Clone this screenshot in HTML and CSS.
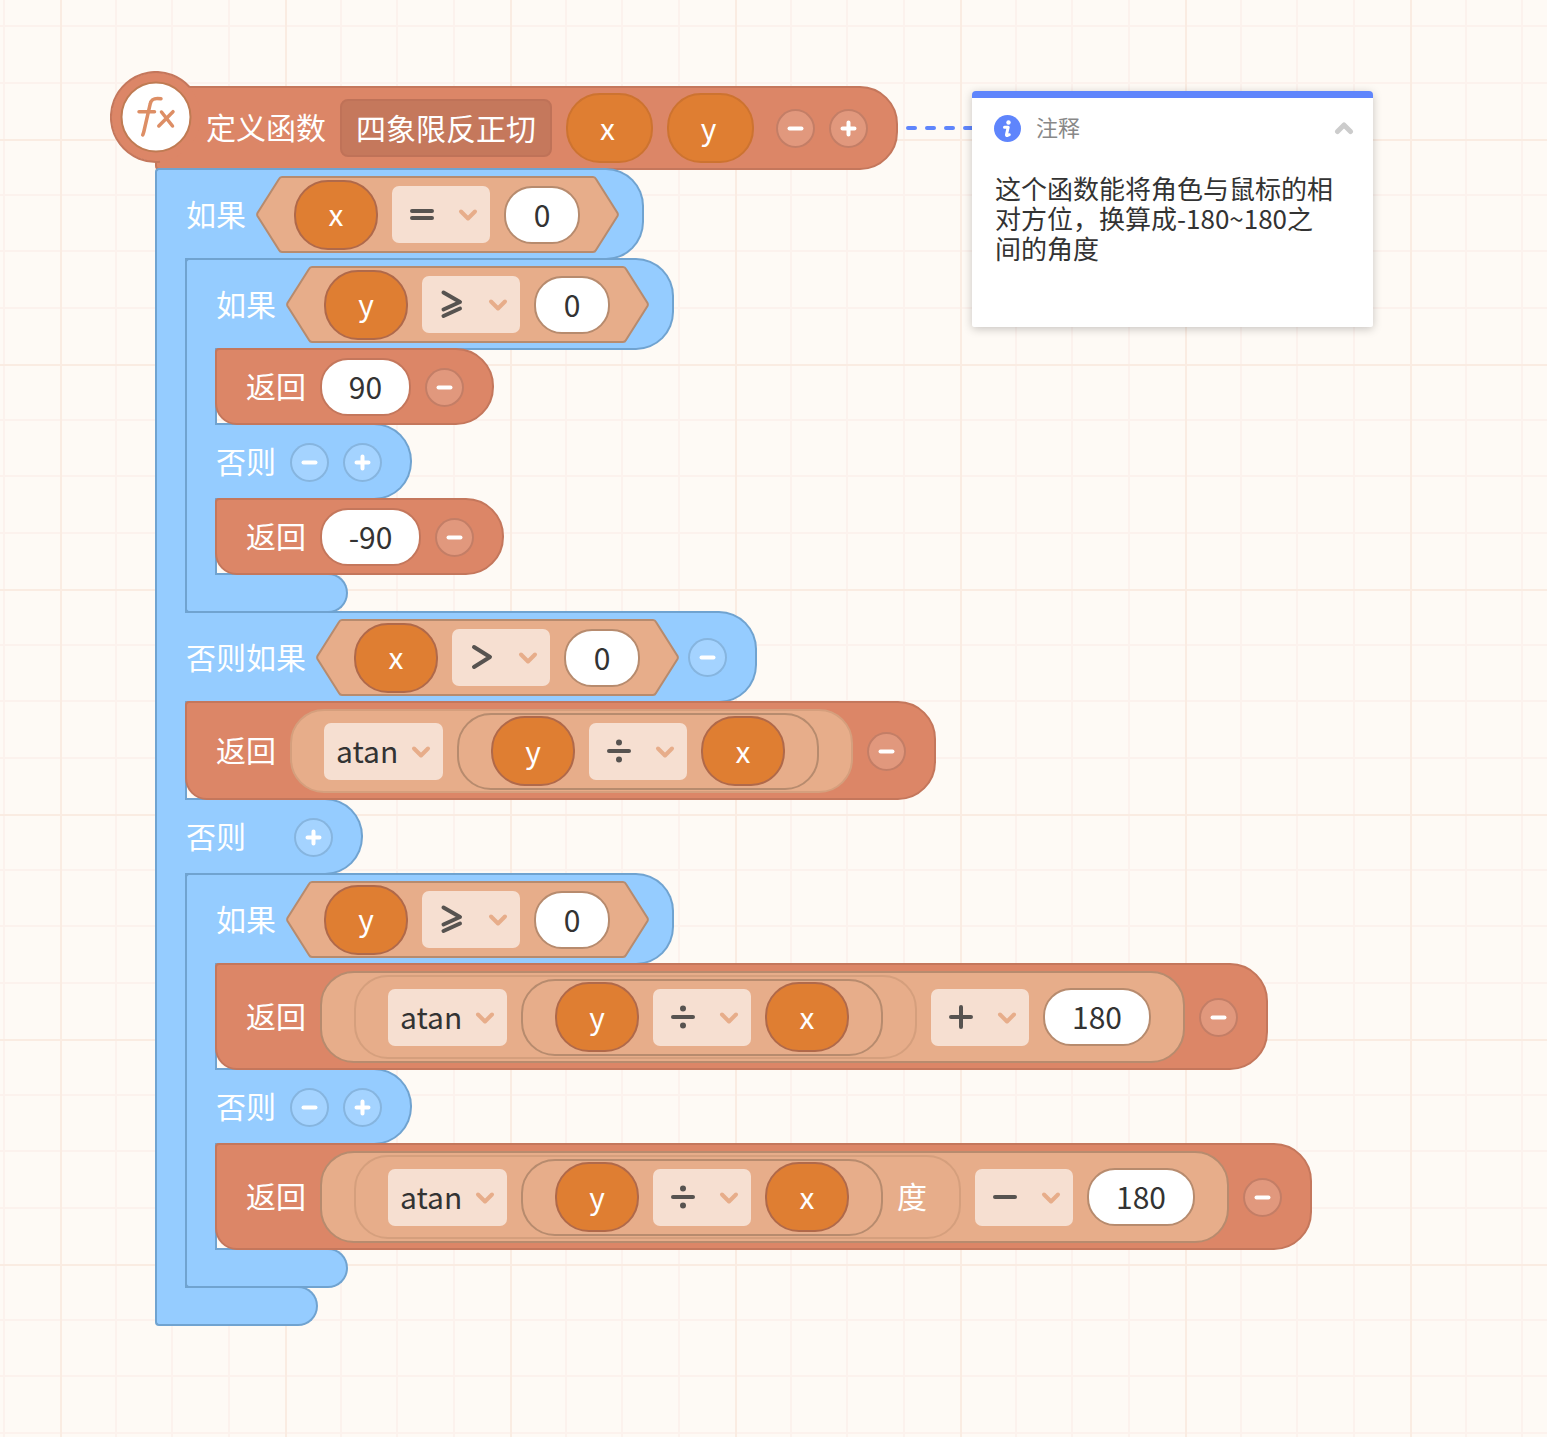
FILE: index.html
```
<!DOCTYPE html>
<html lang="zh-CN">
<head>
    <meta charset="UTF-8">
    <meta name="viewport" content="width=device-width, initial-scale=1.0">
    <title>四象限反正切</title>
    <link rel="stylesheet" href="styles.css">
</head>
<body>
    <!-- Shared icons -->
    <svg class="sprite" aria-hidden="true">
        <symbol id="minus" viewBox="0 0 39 39"><path d="M13.500 19.500h12" /></symbol>
        <symbol id="plus" viewBox="0 0 39 39"><path d="M13.500 19.500h12M19.500 13.500v12" /></symbol>
        <symbol id="chevron" viewBox="0 0 20 14"><path d="M3 3.500l7 7 7-7" /></symbol>
        <symbol id="op-eq" viewBox="0 0 30 30"><path d="M5 12h20M5 19h20" /></symbol>
        <symbol id="op-gt" viewBox="0 0 30 30"><path d="M7 5l16 10L7 25" /></symbol>
        <symbol id="op-ge" viewBox="0 0 30 30"><path d="M6.500 3.500L23 13 6.500 20.500M6.500 27L23 19.500" /></symbol>
        <symbol id="op-div" viewBox="0 0 30 30"><path d="M5 15h20" /><path class="dot" d="M15 6.500v.01M15 23.500v.01" /></symbol>
        <symbol id="op-add" viewBox="0 0 30 30"><path d="M5 15h20M15 5v20" /></symbol>
        <symbol id="op-sub" viewBox="0 0 30 30"><path d="M5 15h20" /></symbol>
        <symbol id="cap-left" viewBox="0 0 26 77">
            <path class="cap-fill" d="M26 1Q24 1 23 3L1.500 37Q.8 38.500 1.500 40L23 74Q24 76 26 76z" />
            <path class="cap-line" d="M26 1Q24 1 23 3L1.500 37Q.8 38.500 1.500 40L23 74Q24 76 26 76" />
        </symbol>
    </svg>

    <main class="canvas">
        <div class="script">
            <!-- Function definition -->
            <div class="def">
                <svg class="badge" viewBox="0 0 92 92" aria-hidden="true">
                    <circle class="badge-ring" cx="46" cy="46" r="44.500" />
                    <path class="badge-edge" d="M79.500 16A45 45 0 1 0 50 90.800" />
                    <circle class="badge-disc" cx="46" cy="46" r="34.500" />
                    <path class="badge-fx" d="M51 27.800C44 26.600 41.200 28 40.200 33L34 60Q33.400 62.500 32.700 64M29 40.700H44.500M51.500 41L62.500 55M63 40.700L48.800 55" />
                </svg>
                <label class="text" for="fnName">定义函数</label>
                <input class="fn-name" id="fnName" type="text" value="四象限反正切">
                <span class="var param">x</span>
                <span class="var param">y</span>
                <button class="round first" type="button" aria-label="减少参数"><svg><use href="#minus" /></svg></button>
                <button class="round" type="button" aria-label="增加参数"><svg><use href="#plus" /></svg></button>
            </div>

            <div class="c-block">
                <div class="spine"></div>
                <div class="stack">
                    <div class="row">
                        <span class="text">如果</span>
                        <div class="hex">
                            <svg class="cap"><use href="#cap-left" /></svg>
                            <div class="hex-body">
                                <span class="var">x</span>
                                <span class="drop op"><select aria-label="比较"><option>=</option></select><svg class="sign"><use href="#op-eq" /></svg><svg class="arrow"><use href="#chevron" /></svg></span>
                                <input class="num" type="text" value="0" aria-label="数值">
                            </div>
                            <svg class="cap flip"><use href="#cap-left" /></svg>
                        </div>
                    </div>

                    <div class="body">
                        <div class="c-block">
                            <div class="spine"></div>
                            <div class="stack">
                                <div class="row">
                                    <span class="text">如果</span>
                                    <div class="hex">
                                        <svg class="cap"><use href="#cap-left" /></svg>
                                        <div class="hex-body">
                                            <span class="var">y</span>
                                            <span class="drop op"><select aria-label="比较"><option>⩾</option></select><svg class="sign"><use href="#op-ge" /></svg><svg class="arrow"><use href="#chevron" /></svg></span>
                                            <input class="num" type="text" value="0" aria-label="数值">
                                        </div>
                                        <svg class="cap flip"><use href="#cap-left" /></svg>
                                    </div>
                                </div>
                                <div class="body">
                                    <div class="return">
                                        <span class="text">返回</span>
                                        <input class="num two" type="text" value="90" aria-label="返回值">
                                        <button class="round" type="button" aria-label="删除返回值"><svg><use href="#minus" /></svg></button>
                                    </div>
                                </div>
                                <div class="row">
                                    <span class="text">否则</span>
                                    <button class="round" type="button" aria-label="减少分支"><svg><use href="#minus" /></svg></button>
                                    <button class="round" type="button" aria-label="增加分支"><svg><use href="#plus" /></svg></button>
                                </div>
                                <div class="body">
                                    <div class="return">
                                        <span class="text">返回</span>
                                        <input class="num signed" type="text" value="-90" aria-label="返回值">
                                        <button class="round" type="button" aria-label="删除返回值"><svg><use href="#minus" /></svg></button>
                                    </div>
                                </div>
                                <div class="tail"></div>
                            </div>
                        </div>
                    </div>

                    <div class="row">
                        <span class="text">否则如果</span>
                        <div class="hex">
                            <svg class="cap"><use href="#cap-left" /></svg>
                            <div class="hex-body">
                                <span class="var">x</span>
                                <span class="drop op"><select aria-label="比较"><option>&gt;</option></select><svg class="sign"><use href="#op-gt" /></svg><svg class="arrow"><use href="#chevron" /></svg></span>
                                <input class="num" type="text" value="0" aria-label="数值">
                            </div>
                            <svg class="cap flip"><use href="#cap-left" /></svg>
                        </div>
                        <button class="round" type="button" aria-label="减少分支"><svg><use href="#minus" /></svg></button>
                    </div>

                    <div class="body">
                        <div class="return">
                            <span class="text">返回</span>
                            <div class="pill medium">
                                <span class="drop"><select aria-label="函数"><option>atan</option></select><svg class="arrow"><use href="#chevron" /></svg></span>
                                <div class="pill">
                                    <span class="var">y</span>
                                    <span class="drop op"><select aria-label="运算"><option>÷</option></select><svg class="sign"><use href="#op-div" /></svg><svg class="arrow"><use href="#chevron" /></svg></span>
                                    <span class="var">x</span>
                                </div>
                            </div>
                            <button class="round" type="button" aria-label="删除返回值"><svg><use href="#minus" /></svg></button>
                        </div>
                    </div>

                    <div class="row">
                        <span class="text">否则</span>
                        <button class="round alone" type="button" aria-label="增加分支"><svg><use href="#plus" /></svg></button>
                    </div>

                    <div class="body">
                        <div class="c-block">
                            <div class="spine"></div>
                            <div class="stack">
                                <div class="row">
                                    <span class="text">如果</span>
                                    <div class="hex">
                                        <svg class="cap"><use href="#cap-left" /></svg>
                                        <div class="hex-body">
                                            <span class="var">y</span>
                                            <span class="drop op"><select aria-label="比较"><option>⩾</option></select><svg class="sign"><use href="#op-ge" /></svg><svg class="arrow"><use href="#chevron" /></svg></span>
                                            <input class="num" type="text" value="0" aria-label="数值">
                                        </div>
                                        <svg class="cap flip"><use href="#cap-left" /></svg>
                                    </div>
                                </div>
                                <div class="body">
                                    <div class="return">
                                        <span class="text">返回</span>
                                        <div class="pill large">
                                            <div class="pill medium">
                                                <span class="drop"><select aria-label="函数"><option>atan</option></select><svg class="arrow"><use href="#chevron" /></svg></span>
                                                <div class="pill">
                                                    <span class="var">y</span>
                                                    <span class="drop op"><select aria-label="运算"><option>÷</option></select><svg class="sign"><use href="#op-div" /></svg><svg class="arrow"><use href="#chevron" /></svg></span>
                                                    <span class="var">x</span>
                                                </div>
                                            </div>
                                            <span class="drop op"><select aria-label="运算"><option>+</option></select><svg class="sign"><use href="#op-add" /></svg><svg class="arrow"><use href="#chevron" /></svg></span>
                                            <input class="num three" type="text" value="180" aria-label="数值">
                                        </div>
                                        <button class="round" type="button" aria-label="删除返回值"><svg><use href="#minus" /></svg></button>
                                    </div>
                                </div>
                                <div class="row">
                                    <span class="text">否则</span>
                                    <button class="round" type="button" aria-label="减少分支"><svg><use href="#minus" /></svg></button>
                                    <button class="round" type="button" aria-label="增加分支"><svg><use href="#plus" /></svg></button>
                                </div>
                                <div class="body">
                                    <div class="return">
                                        <span class="text">返回</span>
                                        <div class="pill large">
                                            <div class="pill medium">
                                                <span class="drop"><select aria-label="函数"><option>atan</option></select><svg class="arrow"><use href="#chevron" /></svg></span>
                                                <div class="pill">
                                                    <span class="var">y</span>
                                                    <span class="drop op"><select aria-label="运算"><option>÷</option></select><svg class="sign"><use href="#op-div" /></svg><svg class="arrow"><use href="#chevron" /></svg></span>
                                                    <span class="var">x</span>
                                                </div>
                                                <span class="text">度</span>
                                            </div>
                                            <span class="drop op"><select aria-label="运算"><option>−</option></select><svg class="sign"><use href="#op-sub" /></svg><svg class="arrow"><use href="#chevron" /></svg></span>
                                            <input class="num three" type="text" value="180" aria-label="数值">
                                        </div>
                                        <button class="round" type="button" aria-label="删除返回值"><svg><use href="#minus" /></svg></button>
                                    </div>
                                </div>
                                <div class="tail"></div>
                            </div>
                        </div>
                    </div>
                    <div class="tail"></div>
                </div>
            </div>
        </div>

        <!-- Comment -->
        <div class="note">
            <svg class="link" viewBox="0 0 66 4" aria-hidden="true"><path d="M2 2h64" /></svg>
            <section class="card">
                <header class="card-head">
                    <svg class="info" viewBox="0 0 27 27" aria-hidden="true">
                        <circle cx="13.500" cy="13.500" r="13.500" />
                        <circle class="info-mark" cx="14.500" cy="7.500" r="2.200" />
                        <path class="info-line" d="M10.500 12.200h3.700l-1.700 7.300q-.2 1.200 1 1l1.800-.8" />
                    </svg>
                    <label class="text" for="noteText">注释</label>
                    <button class="fold" type="button" aria-label="收起"><svg viewBox="0 0 20 14"><path d="M3.500 10.500L10 4l6.500 6.500" /></svg></button>
                </header>
                <textarea class="card-text" id="noteText">这个函数能将角色与鼠标的相对方位，换算成-180~180之间的角度</textarea>
            </section>
        </div>
    </main>
</body>
</html>
```
FILE: styles.css
```
* {
    margin: 0;
    padding: 0;
    box-sizing: border-box;
}

body {
    font-family: "Noto Sans CJK SC", sans-serif;
    font-size: 30px;
    color: #fff;
    background-color: #fefaf5;
}

input, select, textarea, button {
    font: inherit;
    color: inherit;
    border: none;
    background: none;
    outline: none;
}

.sprite {
    position: absolute;
    width: 0;
    height: 0;
}

/* Workspace grid: one strong line every 225px, three light ones between */
.canvas {
    position: relative;
    min-height: 100vh;
    overflow: hidden;
    background-image:
        linear-gradient(90deg, #faece2 2px, transparent 2px),
        linear-gradient(#faece2 2px, transparent 2px),
        linear-gradient(90deg, transparent 55px, #fcf2ed 55px, #fcf2ed 57px, transparent 57px, transparent 111px, #fcf2ed 111px, #fcf2ed 113px, transparent 113px, transparent 168px, #fcf2ed 168px, #fcf2ed 170px, transparent 170px),
        linear-gradient(transparent 55px, #fcf2ed 55px, #fcf2ed 57px, transparent 57px, transparent 111px, #fcf2ed 111px, #fcf2ed 113px, transparent 113px, transparent 168px, #fcf2ed 168px, #fcf2ed 170px, transparent 170px);
    background-size: 225px 225px;
    background-position: 60px 139px;
}

.script {
    position: absolute;
    left: 155px;
    top: 86px;
    white-space: nowrap;
}

/* Blocks share their 2px edges, so each one overlaps the next */
.def, .row, .return, .tail {
    display: flex;
    align-items: center;
    gap: 14px;
    margin-bottom: -2px;
}

.text {
    padding-bottom: 4px;
}

.def {
    position: relative;
    width: max-content;
    height: 84px;
    padding: 0 28px 0 49px;
    background-color: #dc8667;
    border: 2px solid #c4775c;
    border-radius: 0 38px 38px 4px;
}

.badge {
    position: absolute;
    left: -47px;
    top: -17px;
    width: 92px;
    height: 92px;
}

.badge-ring {
    fill: #dc8667;
}

.badge-edge {
    fill: none;
    stroke: #c4775c;
    stroke-width: 2;
}

.badge-disc {
    fill: #fff;
    stroke: #bf7b53;
    stroke-width: 2;
}

.badge-fx {
    fill: none;
    stroke: #dd8e65;
    stroke-width: 3.5;
    stroke-linecap: round;
}

.fn-name {
    width: 212px;
    height: 58px;
    padding: 0 14px 2px;
    background-color: #c5785c;
    border: 2px solid #bf7258;
    border-radius: 8px;
}

.c-block {
    position: relative;
    display: flex;
    margin-bottom: -2px;
}

.spine {
    width: 30px;
    background-color: #95ccff;
    border: 2px solid #70a3d0;
    border-right: none;
    border-radius: 4px 0 0 4px;
}

.stack {
    display: flex;
    flex-direction: column;
    align-items: flex-start;
}

.row {
    min-height: 77px;
    padding: 6px 28px 5px 1px;
    background-color: #95ccff;
    border: 2px solid #70a3d0;
    border-left: none;
    border-radius: 0 38px 38px 0;
}

.tail {
    width: 133px;
    height: 40px;
    background-color: #95ccff;
    border: 2px solid #70a3d0;
    border-left: none;
    border-radius: 0 20px 20px 0;
}

.tail:last-child {
    margin-bottom: 0;
}

.body {
    position: relative;
    z-index: 1;
    display: flex;
    flex-direction: column;
    align-items: flex-start;
    border-left: 2px solid #70a3d0;
}

.body > * {
    margin-left: -2px;
}

.return {
    min-height: 77px;
    padding: 6px 28px 5px 29px;
    background-color: #dc8667;
    border: 2px solid #c4775c;
    border-radius: 4px 38px 38px 22px;
}

/* Condition slot */
.hex {
    display: flex;
    height: 77px;
    margin: 0 -5px 0 -4px;
}

.hex-body {
    display: flex;
    align-items: center;
    gap: 14px;
    padding: 0 13px 0 12px;
    background-color: #e7ad8a;
    border: solid #b78b6e;
    border-width: 2px 0;
}

.cap {
    width: 26px;
    height: 77px;
}

.flip {
    transform: scaleX(-1);
}

.cap-fill {
    fill: #e7ad8a;
}

.cap-line {
    fill: none;
    stroke: #b78b6e;
    stroke-width: 2;
}

/* Expression slot */
.pill {
    display: flex;
    align-items: center;
    gap: 14px;
    height: 77px;
    padding: 0 32px;
    background-color: #e7ad8a;
    border: 2px solid #b78b6e;
    border-radius: 34px;
}

.medium {
    height: 84px;
    border-color: #d59f7d;
}

.large {
    height: 92px;
}

.var {
    display: flex;
    align-items: center;
    justify-content: center;
    width: 84px;
    height: 70px;
    padding-bottom: 3px;
    background-color: #df7e32;
    border: 2px solid #b0694a;
    border-radius: 34px;
}

.param {
    width: 87px;
    padding-right: 4px;
    border-color: #cd7330;
}

.drop {
    position: relative;
    display: flex;
}

.drop select {
    width: 119px;
    height: 57px;
    padding: 0 0 3px 12px;
    color: #333;
    background-color: #f6dfd1;
    border-radius: 7px;
    appearance: none;
}

.op select {
    width: 98px;
    color: transparent;
}

.arrow, .sign {
    position: absolute;
    fill: none;
    stroke-linecap: round;
    stroke-linejoin: round;
    pointer-events: none;
}

.arrow {
    right: 12px;
    top: 22px;
    width: 20px;
    height: 14px;
    stroke: #e7ad8a;
    stroke-width: 4;
}

.sign {
    left: 15px;
    top: 13px;
    width: 30px;
    height: 30px;
    stroke: #575350;
    stroke-width: 4;
}

.dot {
    stroke-width: 6;
}

.num {
    width: 76px;
    height: 58px;
    padding-bottom: 2px;
    color: #333;
    text-align: center;
    background-color: #fff;
    border: 2px solid #b78b6e;
    border-radius: 28px;
}

.return > .num {
    border-color: #c4775c;
}

.two {
    width: 91px;
}

.signed {
    width: 101px;
}

.three {
    width: 108px;
}

.round {
    width: 39px;
    height: 39px;
    background-color: rgba(255, 255, 255, 0.15);
    border: 2px solid rgba(160, 95, 75, 0.45);
    border-radius: 50%;
    cursor: pointer;
}

.row > .round {
    border-color: rgba(90, 135, 175, 0.4);
}

.round svg {
    display: block;
    width: 39px;
    height: 39px;
    margin: -2px;
    stroke: #fff;
    stroke-width: 4;
    stroke-linecap: round;
}

.first {
    margin-left: 8px;
}

.alone {
    margin-left: 34px;
}

/* Comment card, tied to the definition by a dashed line */
.note {
    position: absolute;
    left: 906px;
    top: 91px;
    display: flex;
}

.link {
    width: 66px;
    height: 4px;
    margin-top: 35px;
    fill: none;
    stroke: #5f85fc;
    stroke-width: 4;
    stroke-linecap: round;
    stroke-dasharray: 7 12;
}

.card {
    width: 401px;
    padding: 13px 19px 24px 22px;
    color: #333;
    background-color: #fff;
    border-top: 7px solid #5f85fc;
    border-radius: 4px 4px 2px 2px;
    box-shadow: 0 2px 10px rgba(0, 0, 0, 0.22);
}

.card-head {
    display: flex;
    align-items: center;
    gap: 15px;
    height: 34px;
    color: #888;
    font-size: 22px;
}

.info {
    width: 27px;
    height: 27px;
    fill: #5f85fc;
}

.info-mark {
    fill: #fff;
}

.info-line {
    fill: none;
    stroke: #fff;
    stroke-width: 3;
    stroke-linecap: round;
    stroke-linejoin: round;
}

.fold {
    margin-left: auto;
    cursor: pointer;
}

.fold svg {
    display: block;
    width: 20px;
    height: 14px;
    fill: none;
    stroke: #ccc;
    stroke-width: 5;
    stroke-linecap: round;
    stroke-linejoin: round;
}

.card-text {
    display: block;
    width: 342px;
    height: 130px;
    margin-top: 28px;
    padding-left: 1px;
    font-size: 26px;
    line-height: 30px;
    resize: none;
    overflow: hidden;
}
```
